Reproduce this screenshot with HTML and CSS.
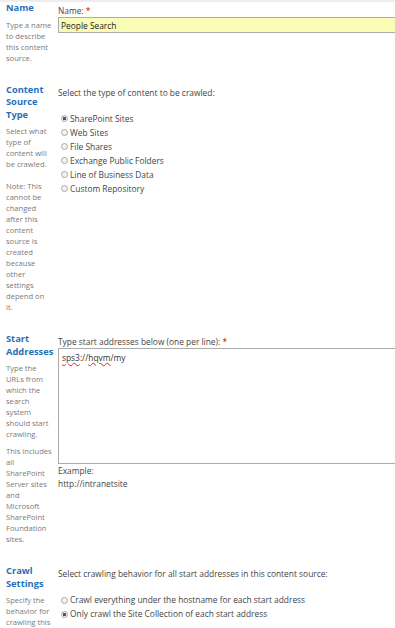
FILE: index.html
```html
<!DOCTYPE html>
<html lang="en">
<head>
    <meta charset="UTF-8">
    <title>Add Content Source</title>
    <link rel="stylesheet" href="styles.css">
</head>
<body>
    <div class="section">
        <div class="side">
            <h3>Name</h3>
            <p>Type a name<br>to describe<br>this content<br>source.</p>
        </div>
        <div class="main">
            <label for="name">Name: <span class="req">*</span></label>
            <input type="text" id="name" class="txt" value="People Search">
        </div>
    </div>

    <div class="section">
        <div class="side">
            <h3>Content Source Type</h3>
            <p>Select what<br>type of<br>content will<br>be crawled.</p>
            <p class="note">Note: This<br>cannot be<br>changed<br>after this<br>content<br>source is<br>created<br>because<br>other<br>settings<br>depend on<br>it.</p>
        </div>
        <div class="main">
            <div class="lbl">Select the type of content to be crawled:</div>
            <div class="options">
                <label class="opt"><input type="radio" name="type" checked> SharePoint Sites</label>
                <label class="opt"><input type="radio" name="type"> Web Sites</label>
                <label class="opt"><input type="radio" name="type"> File Shares</label>
                <label class="opt"><input type="radio" name="type"> Exchange Public Folders</label>
                <label class="opt"><input type="radio" name="type"> Line of Business Data</label>
                <label class="opt"><input type="radio" name="type"> Custom Repository</label>
            </div>
        </div>
    </div>

    <div class="section">
        <div class="side">
            <h3>Start Addresses</h3>
            <p>Type the<br>URLs from<br>which the<br>search<br>system<br>should start<br>crawling.</p>
            <p class="small-gap">This includes<br>all<br>SharePoint<br>Server sites<br>and<br>Microsoft<br>SharePoint<br>Foundation<br>sites.</p>
        </div>
        <div class="main">
            <div class="lbl">Type start addresses below (one per line): <span class="req">*</span></div>
            <div class="textbox"><span class="typo">sps3</span>://<span class="typo">hqvm</span>/my</div>
            <div class="example">Example:<br>http://intranetsite</div>
        </div>
    </div>

    <div class="section">
        <div class="side">
            <h3>Crawl Settings</h3>
            <p>Specify the<br>behavior for<br>crawling this</p>
        </div>
        <div class="main">
            <div class="lbl">Select crawling behavior for all start addresses in this content source:</div>
            <div class="options">
                <label class="opt"><input type="radio" name="crawl"> Crawl everything under the hostname for each start address</label>
                <label class="opt"><input type="radio" name="crawl" checked> Only crawl the Site Collection of each start address</label>
            </div>
        </div>
    </div>
</body>
</html>
```
FILE: styles.css
```css
html, body {
    overflow: hidden;
}
body {
    font-family: 'Open Sans', sans-serif;
    margin: 0;
    border-top: 2px solid #eeeeee;
    color: #444;
    background-color: #fff;
}
.section {
    display: flex;
    padding-left: 6px;
    margin-bottom: 20px;
}
.side {
    flex: 0 0 49px;
}
.side h3 {
    margin: 0 0 5px 0;
    font-size: 9.3px;
    line-height: 12.5px;
    font-weight: 700;
    color: #1f72b8;
}
.side p {
    margin: 0;
    font-size: 7.6px;
    line-height: 11px;
    color: #7a7a7a;
    white-space: nowrap;
}
.side p.note {
    margin-top: 11px;
}
.side p.small-gap {
    margin-top: 6px;
}
.main {
    flex: 1;
    min-width: 0;
    margin-left: 3px;
    padding-top: 3px;
    font-size: 8.4px;
    line-height: 12px;
    white-space: nowrap;
}
.req {
    color: #bf0000;
}
.txt {
    display: block;
    width: 100%;
    height: 16px;
    box-sizing: border-box;
    margin: 0;
    padding: 0 2px;
    border: 1px solid #ababab;
    border-right: none;
    background-color: #fafcb6;
    font-family: 'Open Sans', sans-serif;
    font-size: 8.4px;
    color: #222;
}
.options {
    margin-top: 13px;
}
.opt {
    display: flex;
    align-items: center;
    height: 14px;
}
.opt input {
    appearance: none;
    -webkit-appearance: none;
    width: 7px;
    height: 7px;
    margin: 0 2px 0 3px;
    border: 1px solid #a8a8a8;
    border-radius: 50%;
    background-color: #f2f2f2;
    box-sizing: border-box;
}
.opt input:checked {
    background: radial-gradient(circle, #555 0 1.5px, #f2f2f2 2px);
}
.textbox {
    height: 116px;
    box-sizing: border-box;
    padding: 3px 3px;
    border: 1px solid #ababab;
    border-right: none;
    color: #333;
}
.typo {
    text-decoration: underline wavy #e02020;
    text-decoration-thickness: 1px;
    text-underline-offset: 1px;
}
.example {
    margin-top: 1px;
    line-height: 12.6px;
}
```
